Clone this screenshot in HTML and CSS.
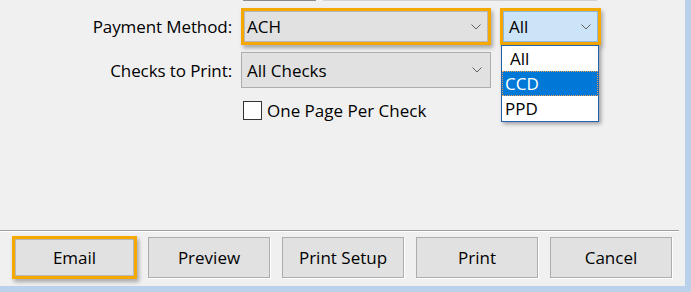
FILE: index.html
```html
<!DOCTYPE html>
<html>
<head>
    <title>Print Checks</title>
    <link rel="stylesheet" href="styles.css">
</head>
<body>
    <div class="dialog">
        <div class="edge">
            <span class="edge-dark"></span>
            <span class="edge-light"></span>
        </div>

        <div class="form">
            <div class="field-label">Payment Method:</div>
            <div class="combo combo-focus">
                <span class="combo-text">ACH</span>
                <svg class="chevron" width="10" height="6" viewBox="0 0 10 6"><polyline points="0.5,0.5 5,5 9.5,0.5" /></svg>
            </div>
            <div class="combo combo-focus combo-open">
                <span class="combo-text">All</span>
                <svg class="chevron" width="10" height="6" viewBox="0 0 10 6"><polyline points="0.5,0.5 5,5 9.5,0.5" /></svg>
                <ul class="dropdown">
                    <li class="dropdown-item first">All</li>
                    <li class="dropdown-item selected">CCD</li>
                    <li class="dropdown-item">PPD</li>
                </ul>
            </div>

            <div class="field-label">Checks to Print:</div>
            <div class="combo">
                <span class="combo-text">All Checks</span>
                <svg class="chevron" width="10" height="6" viewBox="0 0 10 6"><polyline points="0.5,0.5 5,5 9.5,0.5" /></svg>
            </div>
            <div></div>

            <div></div>
            <label class="check">
                <span class="check-box"></span>
                <span>One Page Per Check</span>
            </label>
        </div>

        <div class="footer">
            <div class="separator"></div>
            <div class="buttons">
                <button class="btn btn-focus">Email</button>
                <button class="btn">Preview</button>
                <button class="btn">Print Setup</button>
                <button class="btn">Print</button>
                <button class="btn">Cancel</button>
            </div>
        </div>
    </div>
</body>
</html>
```

FILE: styles.css
```css
body {
    margin: 0;
    background: #b9d1ea;
    font-family: "Open Sans", "Noto Sans", sans-serif;
    font-size: 17px;
    color: #000;
}
.dialog {
    width: 685px;
    height: 286px;
    background: #f0f0f0;
    display: flex;
    flex-direction: column;
}
.edge {
    display: flex;
    height: 1px;
    padding-left: 243px;
}
.edge-dark {
    width: 73px;
    background: #8a8a8a;
}
.edge-light {
    width: 274px;
    margin-left: 7px;
    background: #d2d2d2;
}

.form {
    display: grid;
    grid-template-columns: 232px 250px 101px;
    column-gap: 9px;
    row-gap: 7px;
    margin-top: 7px;
}
.field-label {
    text-align: right;
    align-self: center;
    white-space: nowrap;
    letter-spacing: -0.1px;
}
.combo {
    position: relative;
    display: flex;
    align-items: center;
    justify-content: space-between;
    height: 34px;
    padding: 0 8px 0 5px;
    border: 1px solid #adadad;
    background: #e1e1e1;
}
.combo-focus {
    height: 31px;
    padding: 0 7px 0 3px;
    border: 3px solid #f5a800;
    box-shadow: inset 0 0 0 1px #b8b8b8, 2px 3px 4px rgba(0,0,0,0.3);
}
.combo-open {
    padding: 0 7px 0 6px;
    background: #cce4f7;
    box-shadow: inset 0 0 0 1px #8cb8e0, 2px 3px 4px rgba(0,0,0,0.3);
}
.chevron {
    fill: none;
    stroke: #606060;
    stroke-width: 1;
}

.dropdown {
    position: absolute;
    left: -2px;
    top: 34px;
    width: 96px;
    margin: 0;
    padding: 0;
    list-style: none;
    background: #fff;
    border: 1px solid #1f63b0;
    box-shadow: 2px 2px 4px rgba(0,0,0,0.35);
    z-index: 2;
}
.dropdown-item {
    height: 25px;
    line-height: 25px;
    padding-left: 3px;
}
.dropdown-item.first {
    padding-left: 8px;
}
.dropdown-item.selected {
    background: #0078d7;
    color: #fff;
    outline: 1px dotted #f0a050;
    outline-offset: -1px;
}

.check {
    display: flex;
    align-items: center;
    gap: 5px;
    height: 25px;
    margin-top: 3px;
    padding-left: 2px;
}
.check-box {
    width: 17px;
    height: 17px;
    border: 1px solid #333;
    background: #fff;
}

.footer {
    margin-top: auto;
    padding-bottom: 7px;
}
.separator {
    width: 679px;
    height: 1px;
    background: #a0a0a0;
    border-bottom: 1px solid #fff;
}
.buttons {
    display: flex;
    align-items: center;
    gap: 12px;
    margin-top: 4px;
    padding-left: 12px;
}
.btn {
    width: 122px;
    height: 41px;
    border: 1px solid #adadad;
    background: #e1e1e1;
    box-shadow: 1px 1px 0 #fff;
    font-family: inherit;
    font-size: 17px;
    color: #000;
    padding: 0;
}
.btn-focus {
    width: 125px;
    height: 43px;
    margin-right: -1px;
    border: 3px solid #f5a800;
    box-shadow: inset 0 0 0 1px #b8b8b8, 2px 3px 4px rgba(0,0,0,0.3);
}
```
